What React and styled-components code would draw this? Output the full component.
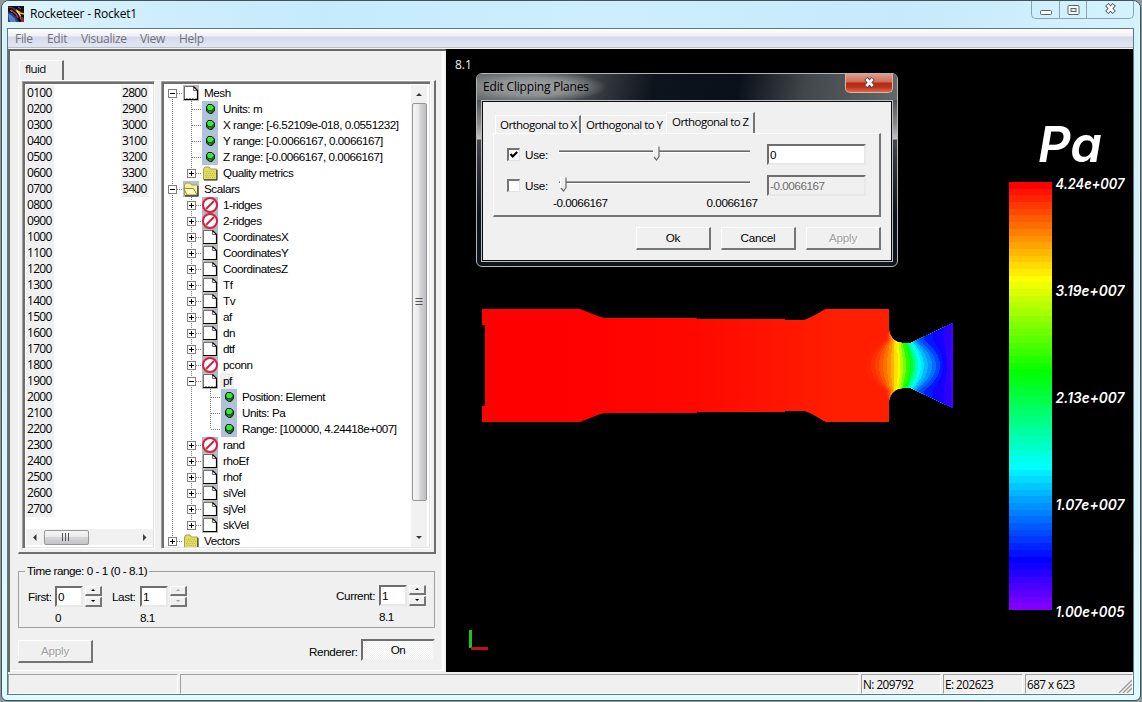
import React from "react";
import styled, { createGlobalStyle, css } from "styled-components";

const SANS = '"Liberation Sans", Arial, sans-serif';
const HUMANIST = '"Open Sans", "Noto Sans", sans-serif';

const Global = createGlobalStyle`
  *, *::before, *::after { box-sizing: border-box; }
  html, body { margin: 0; padding: 0; }
  body {
    width: 1142px;
    height: 702px;
    overflow: hidden;
    background: #8d979c;
    font: 11.7px/14px ${SANS};
    letter-spacing: -0.46px;
    color: #000;
    white-space: nowrap;
  }
`;

/* ---------- window frame ---------- */

const Window = styled.div`
  width: 1140px;
  height: 701px;
  margin: 0 1px 1px;
  border: 1px solid #42535c;
  border-radius: 8px 8px 6px 6px;
  background: linear-gradient(#c6eafb 0, #d2f2fd 28px, #d4f1fb 50%, #dcfdff 100%);
  box-shadow: inset 0 0 0 1px #e4fbff;
`;

const TitleBar = styled.header`
  height: 27px;
  display: flex;
  align-items: flex-start;
  padding-left: 6px;
  border-radius: 7px 7px 0 0;
  background: linear-gradient(90deg, #dff4fc 0, #cfeefc 150px, #c5ebfb 320px, #cdeffd 600px, #c6eafa 900px, #d4f3fd 100%);
`;

const IconSlot = styled.div`
  width: 16px;
  height: 16px;
  margin-top: 5px;
  svg { display: block; }
`;

const TitleText = styled.h1`
  flex: 1;
  margin: 5px 0 0 6px;
  font: 400 12px/16px ${HUMANIST};
  letter-spacing: -0.2px;
`;

const CaptionButtons = styled.div`
  display: flex;
  width: 103px;
  height: 18px;
  margin-right: 6px;
  border: 1px solid #8ba3ae;
  border-top: 0;
  border-radius: 0 0 5px 5px;
  overflow: hidden;
`;

const CaptionButton = styled.div`
  width: ${(p) => p.$w}px;
  display: flex;
  align-items: center;
  justify-content: center;
  & + & { border-left: 1px solid #8ba3ae; }
  svg { display: block; margin-top: -2px; }
`;

const Client = styled.div`
  width: 1127px;
  height: 667px;
  margin-left: 5px;
  border: 1px solid #66767f;
  background: #f0f0f0;
`;

const MenuBar = styled.nav`
  height: 20px;
  display: flex;
  padding-left: 7px;
  background: linear-gradient(#ffffff 0, #eef0f7 7px, #d5daeb 8px, #e2e6f4 18px, #b9bccb 18px, #b9bccb 19px, #f5f5f8 19px);
`;

const MenuItem = styled.span`
  width: ${(p) => p.$w}px;
  font: 12px/20px ${HUMANIST};
  letter-spacing: -0.3px;
  color: #70727b;
`;

const Body = styled.div`
  display: flex;
  height: 623px;
`;

/* ---------- left control panel ---------- */

const ControlPanel = styled.section`
  width: 438px;
  padding: 9px 0 0 8px;
  border-left: 2px solid #696969;
  border-top: 2px solid #696969;
  box-shadow: inset -2px -1px 0 #f0f0f0, inset -4px -2px 0 #fff;
`;

const MeshTab = styled.div`
  width: 45px;
  height: 20px;
  margin-left: 1px;
  padding: 1px 0 0 5px;
  border-left: 1px solid #fff;
  border-top: 1px solid #fff;
  border-right: 2px solid #6c6c6c;
  border-radius: 2px 1px 0 0;
  font: 11.5px/14px ${HUMANIST};
  letter-spacing: -0.6px;
`;

const Notebook = styled.div`
  display: flex;
  gap: 6px;
  width: 418px;
  height: 474px;
  padding-left: 3px;
  border: solid;
  border-width: 1px 2px 2px 1px;
  border-color: #fff #6e6e6e #6e6e6e #fff;
`;

const Sunken = css`
  border: 1px solid;
  border-color: #a0a0a0 #fff #fff #a0a0a0;
  box-shadow: inset 2px 2px 0 #6e6e6e, inset -1px -1px 0 #e3e3e3;
`;

const ListBox = styled.div`
  ${Sunken}
  width: 133px;
  height: 468px;
  padding: 2px 1px 2px 3px;
  background: #fff;
`;

const ListColumns = styled.div`
  display: flex;
  justify-content: space-between;
  height: 445px;
  padding: 1px 4px 0 0;
`;

const ListColumn = styled.div`
  width: 28px;
`;

const ListItem = styled.div`
  height: 16px;
  padding-left: 1px;
  background: #f0f0f0;
  font: 12px/16px ${HUMANIST};
  letter-spacing: -0.72px;
`;

const HScroll = styled.div`
  display: flex;
  align-items: center;
  height: 16px;
  background: #f1f1f1;
`;

const HThumb = styled.div`
  display: flex;
  align-items: center;
  justify-content: center;
  width: 45px;
  height: 15px;
  border: 1px solid #979797;
  border-radius: 2px;
  background: linear-gradient(#f6f6f6 0, #e9e9eb 48%, #d6d6d8 50%, #c4c4c7 100%);
`;

const ScrollEnd = styled.div`
  display: flex;
  align-items: center;
  justify-content: center;
  width: ${(p) => p.$w}px;
  height: ${(p) => p.$h}px;
`;

const Spacer = styled.div`
  flex: 1;
`;

const TreeBox = styled.div`
  ${Sunken}
  display: flex;
  width: 270px;
  height: 468px;
  padding: 3px 3px 2px 2px;
  background: #fff;
`;

const TreeRows = styled.div`
  flex: 1;
  height: 462px;
  overflow: hidden;
`;

const VScroll = styled.div`
  width: 16px;
  height: 462px;
  display: flex;
  flex-direction: column;
  align-items: center;
  background: #f1f1f1;
`;

const VThumb = styled.div`
  display: flex;
  align-items: center;
  justify-content: center;
  width: 15px;
  height: 398px;
  border: 1px solid #979797;
  border-radius: 2px;
  background: linear-gradient(90deg, #f6f6f6 0, #e9e9eb 45%, #d3d3d6 55%, #bfbfc3 100%);
`;

const TreeRow = styled.div`
  display: flex;
  height: 16px;
`;

const TreeLabel = styled.span`
  height: 16px;
  margin-left: 2px;
  padding: 0 2px 0 3px;
  line-height: 16px;
  background: ${(p) => (p.$selected ? "#f0f0f0" : "transparent")};
`;

const IconCell = styled.div`
  width: 16px;
  height: 16px;
  background: ${(p) => p.$bg};
  svg { display: block; }
`;

const GuideCell = styled.div`
  width: 19px;
  height: 16px;
  svg { display: block; }
`;

/* ---------- time range ---------- */

const Group = styled.fieldset`
  width: 417px;
  height: 64px;
  margin: 10px 0 0;
  padding: 0;
  border: 1px solid #a0a0a0;
  min-width: 0;
`;

const Legend = styled.legend`
  height: 14px;
  margin-left: 6px;
  padding: 0 2px;
`;

const GroupRow = styled.div`
  display: flex;
  padding-left: 9px;
`;

const Field = styled.div`
  display: flex;
  margin: ${(p) => p.$m};
`;

const FieldLabel = styled.span`
  width: ${(p) => p.$w}px;
  padding-top: 4px;
  letter-spacing: -0.4px;
`;

const ValueColumn = styled.div`
  width: 28px;
`;

const Caption = styled.div`
  margin-top: 4px;
`;

const TextBox = styled.div`
  width: ${(p) => p.$w}px;
  height: ${(p) => p.$h}px;
  padding-left: 1px;
  line-height: ${(p) => p.$h - 4}px;
  border: 2px solid;
  border-color: #6e6e6e #e8e8e8 #e8e8e8 #6e6e6e;
  background: ${(p) => (p.$off ? "#f0f0f0" : "#fff")};
  color: ${(p) => (p.$off ? "#6d6d6d" : "#000")};
`;

const Spinner = styled.div`
  display: flex;
  flex-direction: column;
  gap: 1px;
  margin-left: 2px;
`;

const Raised = css`
  border: solid;
  border-width: 1px 2px 2px 1px;
  border-color: #fff #757575 #757575 #fff;
  background: #f0f0f0;
`;

const SpinButton = styled.div`
  ${Raised}
  display: flex;
  align-items: center;
  justify-content: center;
  width: 17px;
  height: 10px;
`;

const Button = styled.div`
  ${Raised}
  width: 75px;
  height: 23px;
  text-align: center;
  line-height: 20px;
  letter-spacing: -0.25px;
  color: ${(p) => (p.$off ? "#a0a0a0" : "#000")};
  text-shadow: ${(p) => (p.$off ? "1px 1px 0 #fff" : "none")};
`;

const ActionRow = styled.div`
  display: flex;
  margin-top: 12px;
`;

const RendererLabel = styled.span`
  margin: 5px 5px 0 216px;
  width: 47px;
  letter-spacing: -0.38px;
`;

const Toggle = styled.div`
  width: 74px;
  height: 22px;
  margin-top: -1px;
  border: 2px solid;
  border-color: #6e6e6e #f0f0f0 #f0f0f0 #6e6e6e;
  background: repeating-conic-gradient(#f0f0f0 0 25%, #fff 0 50%) 0 0 / 2px 2px;
  text-align: center;
  line-height: 18px;
`;

/* ---------- viewport ---------- */

const Viewport = styled.section`
  position: relative;
  width: 687px;
  height: 623px;
  background: #000;
`;

const Scene = styled.svg`
  display: block;
  width: 687px;
  height: 623px;
`;

const LegendText = styled.g`
  fill: #fff;
  font-family: Inter, "Open Sans", sans-serif;
  font-style: italic;
  font-weight: 600;
  font-feature-settings: "cv11";
  letter-spacing: 0;
`;

/* ---------- clipping dialog ---------- */

const Dialog = styled.div`
  position: absolute;
  left: 30px;
  top: 24px;
  width: 422px;
  height: 194px;
  border: 1px solid #b4b7b9;
  border-radius: 6px;
  background: linear-gradient(#2e3135 0, #55585b 28px, #8a8a8b 50px, #c4c4c4 65px, #44484c 66px, #33373b 85px, #0d1218 140px, #10151b 100%);
`;

const DialogTitle = styled.div`
  display: flex;
  justify-content: space-between;
  height: 26px;
  border-radius: 5px 5px 0 0;
  background:
    radial-gradient(ellipse 74px 16px at 56px 13px, rgba(164, 166, 167, 0.95) 0, rgba(150, 152, 153, 0.85) 55%, transparent 100%),
    linear-gradient(100deg, #6b6e70 0, #484c50 24%, #0e141b 42%, #0a1017 62%, #42474b 78%, #64686b 100%);
`;

const DialogCaption = styled.h2`
  margin: 5px 0 0 6px;
  font: 400 12px/16px ${HUMANIST};
  letter-spacing: -0.18px;
`;

const DialogClose = styled.div`
  display: flex;
  align-items: center;
  justify-content: center;
  width: 48px;
  height: 19px;
  margin-right: 4px;
  border: 1px solid #d9b3ab;
  border-top: 0;
  border-radius: 0 0 5px 5px;
  background: linear-gradient(#dd9b8d 0, #cf6d58 8px, #b42a12 9px, #bb3218 13px, #dc6a4c 100%);
  svg { display: block; margin-top: -2px; }
`;

const DialogClient = styled.div`
  width: 412px;
  height: 162px;
  margin-left: 4px;
  padding: 11px 11px 0;
  border: 1px solid #b9bdbf;
  outline: 1px solid #0b0d10;
  outline-offset: -2px;
  background: #f0f0f0;
`;

const DialogTabs = styled.div`
  display: flex;
  align-items: flex-end;
  height: 21px;
  padding-left: 2px;
`;

const DialogTab = styled.div`
  width: ${(p) => p.$w}px;
  height: ${(p) => (p.$active ? 21 : 18)}px;
  padding-left: ${(p) => p.$pl}px;
  border: 1px solid #fff;
  border-bottom: 0;
  border-right: ${(p) => (p.$plain ? "0" : "2px solid #757575")};
  font: 11.5px/${(p) => (p.$active ? 18 : 17)}px ${HUMANIST};
  letter-spacing: -0.55px;
`;

const DialogPage = styled.div`
  width: 388px;
  height: 84px;
  padding: 5px 0 0 13px;
  border: solid;
  border-width: 1px 2px 2px 1px;
  border-color: #fff #757575 #757575 #fff;
`;

const ClipRow = styled.div`
  display: flex;
  align-items: center;
  height: 31px;
`;

const CheckBox = styled.div`
  width: 13px;
  height: 13px;
  margin-top: -1px;
  border: 2px solid;
  border-width: 2px 1px 1px 2px;
  border-color: #757575 #e3e3e3 #e3e3e3 #757575;
  background: #fff;
  svg { display: block; }
`;

const UseLabel = styled.span`
  width: 34px;
  margin: 0 0 0 5px;
  letter-spacing: -0.3px;
`;

const Slider = styled.div`
  position: relative;
  width: 191px;
  height: 15px;
  margin-right: 17px;
  padding-top: 3px;
`;

const Track = styled.div`
  height: 3px;
  border-top: 1px solid #a0a0a0;
  background: linear-gradient(#696969 1px, #fff 1px);
`;

const Thumb = styled.svg`
  position: absolute;
  top: -1px;
  left: ${(p) => p.$x}px;
`;

const RangeRow = styled.div`
  display: flex;
  gap: 99px;
  margin: -5px 0 0 46px;
`;

const DialogButtons = styled.div`
  display: flex;
  justify-content: flex-end;
  gap: 10px;
  margin-top: 10px;
`;

/* ---------- status bar ---------- */

const StatusBar = styled.footer`
  display: flex;
  gap: 2px;
  height: 22px;
  padding-top: 2px;
`;

const StatusPane = styled.div`
  display: flex;
  justify-content: space-between;
  width: ${(p) => p.$w}px;
  height: 20px;
  padding-left: 1px;
  border: 1px solid;
  border-color: #a0a0a0 #fff #fff #a0a0a0;
  font: 11.7px/18px ${HUMANIST};
  letter-spacing: -0.5px;
`;

const Grip = styled.svg`
  align-self: flex-end;
`;

/* ---------- icons ---------- */

const AppIcon = () => (
  <svg width="16" height="16" viewBox="0 0 16 16">
    <rect width="16" height="16" fill="#120c16" />
    <path d="M0 6l4 1 4 4 3 5H0z" fill="#2b4390" />
    <path d="M0 8l3 1 4 4 1 3H2z" fill="#5b83c6" />
    <path d="M0 1l5 1 4 3 4 1" stroke="#7c3a34" strokeWidth="1.2" fill="none" />
    <path d="M3 4l5 4 2 4" stroke="#c23a2c" strokeWidth="1.4" fill="none" />
    <path d="M8 4l4 3 4 1" stroke="#f0a83a" strokeWidth="1.8" fill="none" />
    <path d="M9 5l3 4 1 4" stroke="#f5e3b8" strokeWidth="1.3" fill="none" />
    <path d="M12 10l1 6h3v-4z" fill="#7c2a4e" />
    <path d="M2 4l2 2M10 1l3 2M2 12l2 2" stroke="#8a5cb4" strokeWidth="1" />
  </svg>
);

const Cross = ({ stroke = "#505a62" }) => (
  <svg width="13" height="11" viewBox="0 0 13 11">
    <path d="M2.800 1.500L10.200 9.500M10.200 1.500L2.800 9.500" stroke={stroke} strokeWidth="4.600" />
    <path d="M3.300 2L9.700 9M9.700 2L3.300 9" stroke="#fbfdff" strokeWidth="2.600" />
  </svg>
);

const TRI = {
  up: "M0 3h6L3 0z",
  down: "M0 0h6L3 3z",
  left: "M3.5 0v7L0 3.5z",
  right: "M0 0v7l3.5-3.5z",
};
const Arrow = ({ dir, fill = "#3c3c3c", scale = 1 }) => {
  const vertical = dir === "up" || dir === "down";
  const w = vertical ? 6 : 4;
  const h = vertical ? 3 : 7;
  return (
    <svg width={w * scale} height={h * scale} viewBox={`0 0 ${w} ${h}`}>
      <path d={TRI[dir]} fill={fill} />
    </svg>
  );
};

const Page = ({ open }) => (
  <svg width="16" height="16">
    <path d="M1.500 1.500H10.500L14.500 5.500V14.500H1.500Z" fill="#fff" />
    <path d="M1.500 14.500V1.500H10.500" fill="none" stroke="#6f6f6f" />
    <path d="M10.500 1.500V5.500H14.500" fill="none" stroke="#6f6f6f" />
    <path d="M10.500 1.500L14.500 5.500V14.500H1" fill="none" stroke="#000" strokeWidth="1.200" />
    {open && <path d="M3 13.500h11" stroke="#9a9a9a" strokeDasharray="2 1" fill="none" />}
  </svg>
);

const Folder = ({ open }) => (
  <svg width="16" height="16">
    <path d="M1.500 14.500V4l1.500-2h4l1.500 2h6v10.500z" fill={open ? "#f4f0a0" : "#dedb66"} stroke="#a5a24a" />
    {open ? (
      <path d="M0.800 7.500h9.500l4 6.500H4z" fill="#fffbc2" stroke="#8f8c3a" />
    ) : (
      <path d="M3 6h1v1H3zM5 6h1v1H5zM7 6h1v1H7zM9 6h1v1H9zM11 6h1v1h-1zM4 8h1v1H4zM6 8h1v1H6zM8 8h1v1H8zM10 8h1v1h-1zM12 8h1v1h-1zM3 10h1v1H3zM5 10h1v1H5zM7 10h1v1H7zM9 10h1v1H9zM11 10h1v1h-1zM4 12h1v1H4zM6 12h1v1H6zM8 12h1v1H8zM10 12h1v1h-1zM12 12h1v1h-1z" fill="#c4be38" />
    )}
    <path d="M15 5v10H2" stroke="#1c1c10" fill="none" />
  </svg>
);

const Ball = () => (
  <svg width="16" height="16">
    <path d="M6 3.500H10L12.500 6V9.500L10 12.500H7.500L4.500 10V6Z" fill="#0f6a16" stroke="#06200a" />
    <path d="M6.200 4H9.800L11.800 6.500L9.800 9H6.500L5 6.500Z" fill="#3ee83a" />
    <path d="M8 10v2.500" stroke="#5f8f63" />
  </svg>
);

const Forbidden = () => (
  <svg width="16" height="16">
    <circle cx="8" cy="8" r="7" fill="#fff" stroke="#cf2340" strokeWidth="2" />
    <path d="M4 12L12 4" stroke="#cf2340" strokeWidth="2" />
  </svg>
);

const ICONS = {
  page: ["#b9b9b9", <Page />],
  pageOpen: ["#b9b9b9", <Page open />],
  folder: ["#fff", <Folder />],
  folderOpen: ["#b1c0dd", <Folder open />],
  ball: ["#b1c0dd", <Ball />],
  no: ["#b9b3c6", <Forbidden />],
};

/* Dotted guide segment of one tree level; the stub reaches the icon that follows. */
const Guide = ({ up, down, stub, box }) => (
  <GuideCell>
    <svg width="19" height="16" shapeRendering="crispEdges">
      <g stroke="#808080" strokeDasharray="1 1" fill="none">
        {up && <path d="M8.500 0V8" />}
        {down && <path d="M8.500 8V16" />}
        {stub && <path d="M9 8.500H19" />}
      </g>
      {box && (
        <g>
          <rect x="4.500" y="4.500" width="8" height="8" fill="#fff" stroke="#808080" />
          <path d="M6 8.500h5" stroke="#000" />
          {box === "+" && <path d="M8.500 6v5" stroke="#000" />}
        </g>
      )}
    </svg>
  </GuideCell>
);

const TREE = [
  [0, "-", "pageOpen", "Mesh"],
  [1, "", "ball", "Units: m"],
  [1, "", "ball", "X range: [-6.52109e-018, 0.0551232]"],
  [1, "", "ball", "Y range: [-0.0066167, 0.0066167]"],
  [1, "", "ball", "Z range: [-0.0066167, 0.0066167]"],
  [1, "+", "folder", "Quality metrics"],
  [0, "-", "folderOpen", "Scalars"],
  [1, "+", "no", "1-ridges"],
  [1, "+", "no", "2-ridges"],
  [1, "+", "page", "CoordinatesX"],
  [1, "+", "page", "CoordinatesY"],
  [1, "+", "page", "CoordinatesZ"],
  [1, "+", "page", "Tf"],
  [1, "+", "page", "Tv"],
  [1, "+", "page", "af"],
  [1, "+", "page", "dn"],
  [1, "+", "page", "dtf"],
  [1, "+", "no", "pconn"],
  [1, "-", "pageOpen", "pf", true],
  [2, "", "ball", "Position: Element"],
  [2, "", "ball", "Units: Pa"],
  [2, "", "ball", "Range: [100000, 4.24418e+007]"],
  [1, "+", "no", "rand"],
  [1, "+", "page", "rhoEf"],
  [1, "+", "page", "rhof"],
  [1, "+", "page", "siVel"],
  [1, "+", "page", "sjVel"],
  [1, "+", "page", "skVel"],
  [0, "+", "folder", "Vectors"],
];

const hasNext = (i, level) => {
  for (let j = i + 1; j < TREE.length; j++) {
    if (TREE[j][0] < level) return false;
    if (TREE[j][0] === level) return true;
  }
  return false;
};

const Tree = () => (
  <TreeRows>
    {TREE.map(([level, box, icon, label, selected], i) => (
      <TreeRow key={i}>
        {Array.from({ length: level + 1 }, (_, l) => {
          const more = hasNext(i, l);
          return l < level ? (
            <Guide key={l} up={more} down={more} />
          ) : (
            <Guide key={l} up={i > 0} down={more} stub box={box} />
          );
        })}
        <IconCell $bg={ICONS[icon][0]}>{ICONS[icon][1]}</IconCell>
        <TreeLabel $selected={selected}>{label}</TreeLabel>
      </TreeRow>
    ))}
  </TreeRows>
);

const steps = (from, to) =>
  Array.from({ length: to - from + 1 }, (_, i) => String((from + i) * 100).padStart(4, "0"));

/* ---------- pressure field ---------- */

/* [x on the axis, x at the wall, colour] for each contour, left to right */
const CONTOURS = [
  [866, 886, "#ff2400"], [871, 887, "#ff2e00"], [875, 888, "#ff4000"], [879, 889, "#ff5600"],
  [883, 890, "#ff7200"], [887, 891, "#ff9000"], [891, 893, "#ffb400"], [894, 894, "#ffe000"],
  [898, 896, "#f4ff00"], [900, 898, "#b8ff00"], [903, 900, "#78ff00"], [906, 901, "#28ff00"],
  [910, 903, "#00ff28"], [913, 905, "#00ff70"], [915, 906, "#00ffb4"], [918, 908, "#00ffee"],
  [921, 910, "#00e4ff"], [924, 911, "#00b8ff"], [928, 913, "#0094ff"], [932, 915, "#006cff"],
  [936, 918, "#0044ff"], [940, 924, "#0018ff"], [943, 933, "#1400ff"], [947, 944, "#2c00ff"],
  [950, 951, "#4200ff"],
];

const ROCKET =
  "M482 309H580L599 316.500L605 318H697V319H785V320H804L810 317.500L826 309H889V330" +
  "C890 337 895 343 903 343H911L953 323V408L911 388H903C895 388 890 394 889 401V422H826" +
  "L810 413L804 411H785V412H697V413H605L599 414.500L580 422H482V406H485V325H482Z";

const TICKS = [
  [184, "4.24e+007"],
  [291, "3.19e+007"],
  [398, "2.13e+007"],
  [505, "1.07e+007"],
  [612, "1.00e+005"],
];

const BANDS = 64;

const PressureScene = () => (
  <Scene viewBox="446 49 687 623">
    <clipPath id="rocket">
      <path d={ROCKET} />
    </clipPath>
    <linearGradient id="chamber" gradientUnits="userSpaceOnUse" x1="560" y1="0" x2="835" y2="0">
      <stop offset="0" stopColor="#ff0000" />
      <stop offset="0.5" stopColor="#ff0800" />
      <stop offset="1" stopColor="#ff1e00" />
    </linearGradient>
    <g clipPath="url(#rocket)" shapeRendering="crispEdges">
      <rect x="480" y="300" width="480" height="130" fill="url(#chamber)" />
      {CONTOURS.map(([c, w, fill]) => (
        <path
          key={c}
          fill={fill}
          d={`M${w} 300V340Q${2 * c - w} 365.500 ${w} 391V430H960V300Z`}
        />
      ))}
      <path d="M820 300H889V332L884 340H820ZM820 430H889V399L884 391H820Z" fill="url(#chamber)" />
    </g>
    <g shapeRendering="crispEdges">
      {Array.from({ length: BANDS }, (_, i) => (
        <rect
          key={i}
          x="1009"
          y={182 + Math.round((i * 428) / BANDS)}
          width="43"
          height="7"
          fill={`hsl(${(i * 270) / (BANDS - 1)} 100% 50%)`}
        />
      ))}
      <rect x="1009" y="610" width="43" height="2" fill="#000" />
      <rect x="469" y="630" width="3" height="18" fill="#17c717" />
      <rect x="471" y="647" width="17" height="3" fill="#c01212" />
    </g>
    <LegendText>
      <text x="1038" y="162" fontSize="50" textLength="64" lengthAdjust="spacingAndGlyphs">
        Pa
      </text>
      {TICKS.map(([y, t]) => (
        <text key={t} x="1055.500" y={y + 5} fontSize="14.500" textLength="69" lengthAdjust="spacingAndGlyphs">
          {t}
        </text>
      ))}
    </LegendText>
    <text x="455" y="69" fill="#f0f0f0" fontFamily={HUMANIST} fontSize="12" letterSpacing="0">
      8.1
    </text>
  </Scene>
);

const ThumbMark = ({ x }) => (
  <Thumb $x={x} width="7" height="15">
    <path d="M0.500 0.500h5.500v10l-2.750 3.500l-2.750-3.500z" fill="#f0f0f0" />
    <path d="M0.500 11V0.500H5.500" stroke="#fff" fill="none" />
    <path d="M1 11l2.500 3l2.500-3.500V0.500" stroke="#6a6a6a" strokeWidth="1.200" fill="none" />
  </Thumb>
);

const ClippingDialog = () => (
  <Dialog>
    <DialogTitle>
      <DialogCaption>Edit Clipping Planes</DialogCaption>
      <DialogClose>
        <Cross stroke="#6b3a36" />
      </DialogClose>
    </DialogTitle>
    <DialogClient>
      <DialogTabs>
        <DialogTab $w={86} $pl={4}>Orthogonal to X</DialogTab>
        <DialogTab $w={85} $pl={4} $plain>Orthogonal to Y</DialogTab>
        <DialogTab $w={89} $pl={5} $active>Orthogonal to Z</DialogTab>
      </DialogTabs>
      <DialogPage>
        <ClipRow>
          <CheckBox>
            <svg width="10" height="10">
              <path d="M1.500 4l2.200 2.500L8.200 2" stroke="#000" strokeWidth="2.200" fill="none" />
            </svg>
          </CheckBox>
          <UseLabel>Use:</UseLabel>
          <Slider>
            <Track />
            <ThumbMark x={94} />
          </Slider>
          <TextBox $w={99} $h={21}>0</TextBox>
        </ClipRow>
        <ClipRow>
          <CheckBox />
          <UseLabel>Use:</UseLabel>
          <Slider>
            <Track />
            <ThumbMark x={1} />
          </Slider>
          <TextBox $w={99} $h={21} $off>-0.0066167</TextBox>
        </ClipRow>
        <RangeRow>
          <span>-0.0066167</span>
          <span>0.0066167</span>
        </RangeRow>
      </DialogPage>
      <DialogButtons>
        <Button>Ok</Button>
        <Button>Cancel</Button>
        <Button $off>Apply</Button>
      </DialogButtons>
    </DialogClient>
  </Dialog>
);

const StepField = ({ label, w, value, caption, m, off }) => (
  <Field $m={m}>
    <FieldLabel $w={w}>{label}</FieldLabel>
    <ValueColumn>
      <TextBox $w={28} $h={21}>{value}</TextBox>
      <Caption>{caption}</Caption>
    </ValueColumn>
    <Spinner>
      <SpinButton><Arrow dir="up" scale={0.7} fill={off ? "#a0a0a0" : "#000"} /></SpinButton>
      <SpinButton><Arrow dir="down" scale={0.7} fill={off ? "#a0a0a0" : "#000"} /></SpinButton>
    </Spinner>
  </Field>
);

export default function App() {
  return (
    <>
      <Global />
      <Window>
        <TitleBar>
          <IconSlot><AppIcon /></IconSlot>
          <TitleText>Rocketeer - Rocket1</TitleText>
          <CaptionButtons>
            <CaptionButton $w={27}>
              <svg width="12" height="16"><rect x="0.500" y="9.500" width="11" height="4" rx="1" fill="#fff" stroke="#59656d" /></svg>
            </CaptionButton>
            <CaptionButton $w={27}>
              <svg width="13" height="16">
                <rect x="1" y="4.500" width="11" height="9" rx="1" fill="#fff" stroke="#59656d" />
                <rect x="4" y="7.500" width="5" height="3" fill="#d5ecf5" stroke="#59656d" />
              </svg>
            </CaptionButton>
            <CaptionButton $w={47}><Cross /></CaptionButton>
          </CaptionButtons>
        </TitleBar>
        <Client>
          <MenuBar>
            <MenuItem $w={32}>File</MenuItem>
            <MenuItem $w={34}>Edit</MenuItem>
            <MenuItem $w={59}>Visualize</MenuItem>
            <MenuItem $w={39}>View</MenuItem>
            <MenuItem $w={40}>Help</MenuItem>
          </MenuBar>
          <Body>
            <ControlPanel>
              <MeshTab>fluid</MeshTab>
              <Notebook>
                <ListBox>
                  <ListColumns>
                    <ListColumn>
                      {steps(1, 27).map((s) => <ListItem key={s}>{s}</ListItem>)}
                    </ListColumn>
                    <ListColumn>
                      {steps(28, 34).map((s) => <ListItem key={s}>{s}</ListItem>)}
                    </ListColumn>
                  </ListColumns>
                  <HScroll>
                    <ScrollEnd $w={18} $h={16}><Arrow dir="left" /></ScrollEnd>
                    <HThumb>
                      <svg width="9" height="8"><path d="M0.500 0v8M3.500 0v8M6.500 0v8" stroke="#555" /></svg>
                    </HThumb>
                    <Spacer />
                    <ScrollEnd $w={17} $h={16}><Arrow dir="right" /></ScrollEnd>
                  </HScroll>
                </ListBox>
                <TreeBox>
                  <Tree />
                  <VScroll>
                    <ScrollEnd $w={16} $h={18}><Arrow dir="up" /></ScrollEnd>
                    <VThumb>
                      <svg width="8" height="9"><path d="M0.500 0.500h7M0.500 3.500h7M0.500 6.500h7" stroke="#555" /></svg>
                    </VThumb>
                    <Spacer />
                    <ScrollEnd $w={16} $h={19}><Arrow dir="down" /></ScrollEnd>
                  </VScroll>
                </TreeBox>
              </Notebook>
              <Group>
                <Legend>Time range: 0 - 1 (0 - 8.1)</Legend>
                <GroupRow>
                  <StepField label="First:" w={27} value="0" caption="0" m="8px 0 0" />
                  <StepField label="Last:" w={28} value="1" caption="8.1" m="8px 0 0 10px" off />
                  <StepField label="Current:" w={43} value="1" caption="8.1" m="7px 0 0 149px" />
                </GroupRow>
              </Group>
              <ActionRow>
                <Button $off>Apply</Button>
                <RendererLabel>Renderer:</RendererLabel>
                <Toggle>On</Toggle>
              </ActionRow>
            </ControlPanel>
            <Viewport>
              <PressureScene />
              <ClippingDialog />
            </Viewport>
          </Body>
          <StatusBar>
            <StatusPane $w={170} />
            <StatusPane $w={679} />
            <StatusPane $w={80}>N: 209792</StatusPane>
            <StatusPane $w={80}>E: 202623</StatusPane>
            <StatusPane $w={108}>
              687 x 623
              <Grip width="14" height="14">
                <path d="M1 14L14 1M5 14L14 5M9 14L14 9" stroke="#9a9a9a" strokeWidth="1.300" />
              </Grip>
            </StatusPane>
          </StatusBar>
        </Client>
      </Window>
    </>
  );
}
